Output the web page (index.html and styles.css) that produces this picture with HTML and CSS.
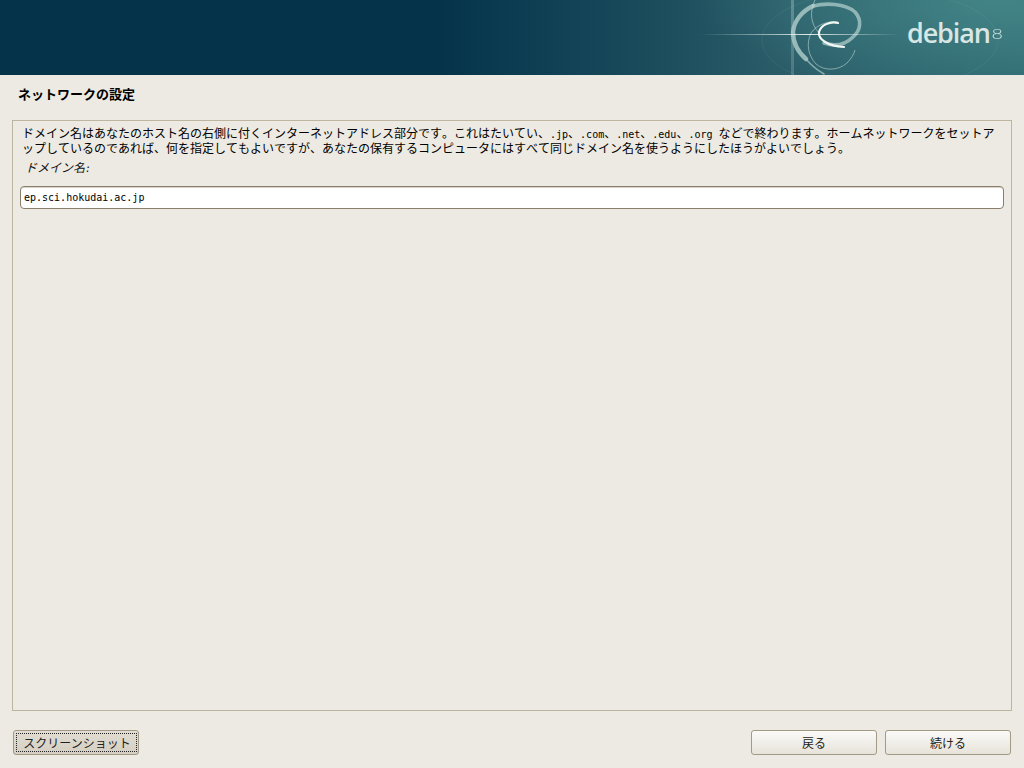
FILE: index.html
```html
<!DOCTYPE html>
<html lang="ja">
<head>
<meta charset="utf-8">
<title>ネットワークの設定</title>
<link rel="stylesheet" href="styles.css">
</head>
<body>
<header class="banner">
  <svg class="swirl" width="344" height="75" viewBox="680 0 344 75" aria-hidden="true">
    <defs>
      <linearGradient id="beam" x1="0" x2="1" y1="0" y2="0">
        <stop offset="0" stop-color="#dfeeea" stop-opacity="0"/>
        <stop offset="0.55" stop-color="#f2f8f5" stop-opacity="0.9"/>
        <stop offset="1" stop-color="#dfeeea" stop-opacity="0"/>
      </linearGradient>
      <linearGradient id="post" x1="0" x2="0" y1="0" y2="1">
        <stop offset="0" stop-color="#cfe3e0" stop-opacity="0.3"/>
        <stop offset="1" stop-color="#cfe3e0" stop-opacity="0.2"/>
      </linearGradient>
      <filter id="soft" x="-10%" y="-10%" width="120%" height="120%">
        <feGaussianBlur stdDeviation="0.35"/>
      </filter>
    </defs>
    <ellipse class="halo" cx="880" cy="40" rx="118" ry="50"/>
    <rect x="791" y="0" width="3" height="75" fill="url(#post)"/>
    <g filter="url(#soft)">
      <path class="ring-top" d="M813 6 C825 3 845 3 855 12 C862 20 861 30 853 37 C846 44 836 47 824 43"/>
      <path class="ring-left" d="M813 6 C802 11 794 21 793 32 C793 44 798 52 806 59"/>
      <path class="ring-tail" d="M806 59 C811 65 817 70 824 74"/>
      <path class="ring-thin" d="M815 0 C809 13 811 24 819 33"/>
      <path class="ring-thin" d="M838 22 C829 21 817 24 811 33 C806 44 808 55 816 64 C824 71 838 71 847 63 C851 59 854 54 855 50"/>
      <path class="ring-bright" d="M838 23 C830 21 821 25 819 32 C818 39 827 46 844 47"/>
    </g>
    <rect x="700" y="34" width="200" height="1" fill="url(#beam)"/>
  </svg>
  <div class="brand"><span class="brand-name">debian</span><span class="brand-ver">8</span></div>
</header>
<main class="page">
  <h1 class="title">ネットワークの設定</h1>
  <section class="frame">
    <p class="help">ドメイン名はあなたのホスト名の右側に付くインターネットアドレス部分です。これはたいてい、<span class="mono">.jp</span>、<span class="mono">.com</span>、<span class="mono">.net</span>、<span class="mono">.edu</span>、<span class="mono">.org </span>などで終わります。ホームネットワークをセットア<br>ップしているのであれば、何を指定してもよいですが、あなたの保有するコンピュータにはすべて同じドメイン名を使うようにしたほうがよいでしょう。</p>
    <label class="field-label" for="domain">ドメイン名<span class="mono">:</span></label>
    <input class="field" id="domain" type="text" value="ep.sci.hokudai.ac.jp">
  </section>
  <footer class="actions">
    <button class="btn btn-focus" type="button"><span class="focus-ring">スクリーンショット</span></button>
    <div class="actions-right">
      <button class="btn" type="button">戻る</button>
      <button class="btn" type="button">続ける</button>
    </div>
  </footer>
</main>
</body>
</html>
```
FILE: styles.css
```css
* { box-sizing: border-box; }
html, body { margin: 0; height: 100%; }
body {
  width: 1024px;
  height: 768px;
  overflow: hidden;
  background: #edeae3;
  color: #000;
  font: 12px/14px "Noto Sans CJK JP", "Noto Sans", sans-serif;
  font-kerning: none;
  text-spacing-trim: space-all;
  display: flex;
  flex-direction: column;
}
.banner {
  height: 75px;
  flex: none;
  display: flex;
  justify-content: flex-end;
  position: relative;
  overflow: hidden;
  background:
    radial-gradient(ellipse 300px 100px at 1000px 0, rgba(72,140,140,.8), rgba(60,125,128,0) 100%),
    linear-gradient(90deg, #05344a 0, #05344a 440px, #0f4054 550px, #1c4d5d 660px, #2b5d69 790px, #2f6a72 1024px);
}
.swirl { position: absolute; left: 680px; top: 0; }
.halo { fill: none; stroke: #8fc4bd; stroke-opacity: .1; }
.ring-top { fill: none; stroke: #9fc1c0; stroke-width: 3.6; stroke-opacity: .85; stroke-linecap: round; }
.ring-left { fill: none; stroke: #a9c8c6; stroke-width: 4.4; stroke-opacity: .85; stroke-linecap: round; }
.ring-tail { fill: none; stroke: #a9c8c6; stroke-width: 1.6; stroke-opacity: .7; stroke-linecap: round; }
.ring-thin { fill: none; stroke: #bcd6d3; stroke-width: 1; stroke-opacity: .6; }
.ring-bright { fill: none; stroke: #f2f8f4; stroke-width: 2.2; stroke-linecap: round; }
.brand {
  position: relative;
  margin: 16px 23px 0 0;
  height: 34px;
  display: flex;
  align-items: baseline;
  color: #d8e6e4;
  font-family: "Open Sans", sans-serif;
}
.brand-name { font-size: 27px; line-height: 34px; letter-spacing: -1.1px; font-weight: 600; }
.brand-ver {
  display: inline-block;
  font-family: "Lato", sans-serif;
  font-weight: 300;
  font-size: 14px;
  line-height: 14px;
  margin-left: 3px;
  position: relative;
  top: -4px;
  color: #cfe2df;
  transform: scaleX(1.4);
}
.page {
  flex: 1;
  display: flex;
  flex-direction: column;
  padding: 11px 12px 13px;
  min-height: 0;
}
.title {
  margin: 0 0 19px 6px;
  font-size: 13px;
  line-height: 15px;
  font-weight: 700;
}
.frame {
  flex: 1;
  border: 1px solid #bdb5a0;
  padding: 4px 7px 0 7px;
  display: flex;
  flex-direction: column;
  min-height: 0;
}
.help { margin: 0 0 0 2px; height: 30px; line-height: 15px; }
.mono { font-family: "DejaVu Sans Mono", monospace; font-size: 10px; line-height: 0; white-space: pre; }
.field-label { margin: 4px 0 0 5px; font-style: italic; line-height: 15px; color: #111; }
.field {
  margin-top: 12px;
  height: 23px;
  width: 984px;
  border: 1px solid #8a7f6c;
  border-radius: 4px;
  background: #fff;
  padding: 0 3px;
  color: #000;
  font: 10px "DejaVu Sans Mono", monospace;
  outline: none;
  box-shadow: inset 0 1px 0 #d8d4ca;
}
.actions {
  flex: none;
  margin-top: 19px;
  display: flex;
  justify-content: space-between;
  padding: 0 1px;
}
.actions-right { display: flex; gap: 8px; }
.btn {
  width: 126px;
  height: 25px;
  border: 1px solid #a39a85;
  border-radius: 3px;
  background: linear-gradient(#fbfaf8, #e7e3da);
  color: #222;
  font: 12px/14px "Noto Sans CJK JP", sans-serif;
  padding: 0;
  display: flex;
  align-items: center;
  justify-content: center;
}
.btn-focus { background: linear-gradient(#e2ddd2, #d5cfc3); padding: 2px 1px 2px 2px; }
.focus-ring {
  width: 100%;
  height: 100%;
  border: 1px dotted #222;
  padding-left: 1px;
  display: flex;
  align-items: center;
  justify-content: center;
}
```
